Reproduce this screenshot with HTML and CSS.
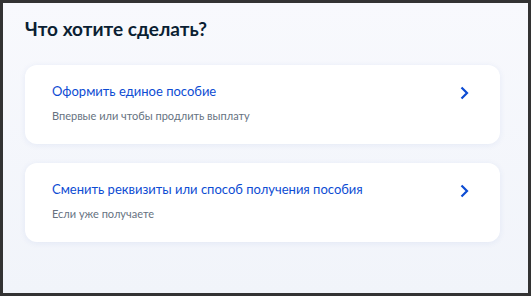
FILE: index.html
```html
<!DOCTYPE html>
<html lang="ru">
<head>
    <meta charset="UTF-8">
    <title>Что хотите сделать?</title>
    <link rel="stylesheet" href="styles.css">
</head>
<body>
<div class="frame">
    <h1>Что хотите сделать?</h1>
    <div class="options">
        <a class="option" href="#">
            <div class="text">
                <span class="title">Оформить единое пособие</span>
                <span class="hint">Впервые или чтобы продлить выплату</span>
            </div>
            <svg class="arrow" width="9" height="14" viewBox="0 0 9 14">
                <path d="M1.5 1.5 L7 7 L1.5 12.5" fill="none" stroke="#0d4cd3" stroke-width="2.2"/>
            </svg>
        </a>
        <a class="option" href="#">
            <div class="text">
                <span class="title">Сменить реквизиты или способ получения пособия</span>
                <span class="hint">Если уже получаете</span>
            </div>
            <svg class="arrow" width="9" height="14" viewBox="0 0 9 14">
                <path d="M1.5 1.5 L7 7 L1.5 12.5" fill="none" stroke="#0d4cd3" stroke-width="2.2"/>
            </svg>
        </a>
    </div>
</div>
</body>
</html>
```

FILE: styles.css
```css
body {
    margin: 0;
    padding: 0;
    background: #333;
    font-family: Lato, "Noto Sans", sans-serif;
}

.frame {
    box-sizing: border-box;
    width: 531px;
    height: 296px;
    border: 3px solid #333;
    background: linear-gradient(180deg, #f8f9fd 0%, #f1f4fa 100%);
    padding: 13px 28px 0 22px;
}

h1 {
    margin: 0;
    font-size: 19px;
    line-height: 26px;
    font-weight: 700;
    color: #0b1f33;
}

.options {
    display: flex;
    flex-direction: column;
    gap: 19px;
    margin-top: 23px;
}

.option {
    display: flex;
    align-items: flex-start;
    justify-content: space-between;
    padding: 17px 31px 21px 27px;
    background: #fff;
    border-radius: 12px;
    box-shadow: 0 1px 6px rgba(40, 80, 180, 0.08);
    text-decoration: none;
}

.text {
    display: flex;
    flex-direction: column;
    gap: 9px;
}

.title {
    font-size: 13px;
    line-height: 18px;
    color: #0d4cd3;
}

.hint {
    font-size: 11px;
    line-height: 14px;
    color: #66727f;
}

.arrow {
    display: block;
    margin-top: 4px;
}
```
